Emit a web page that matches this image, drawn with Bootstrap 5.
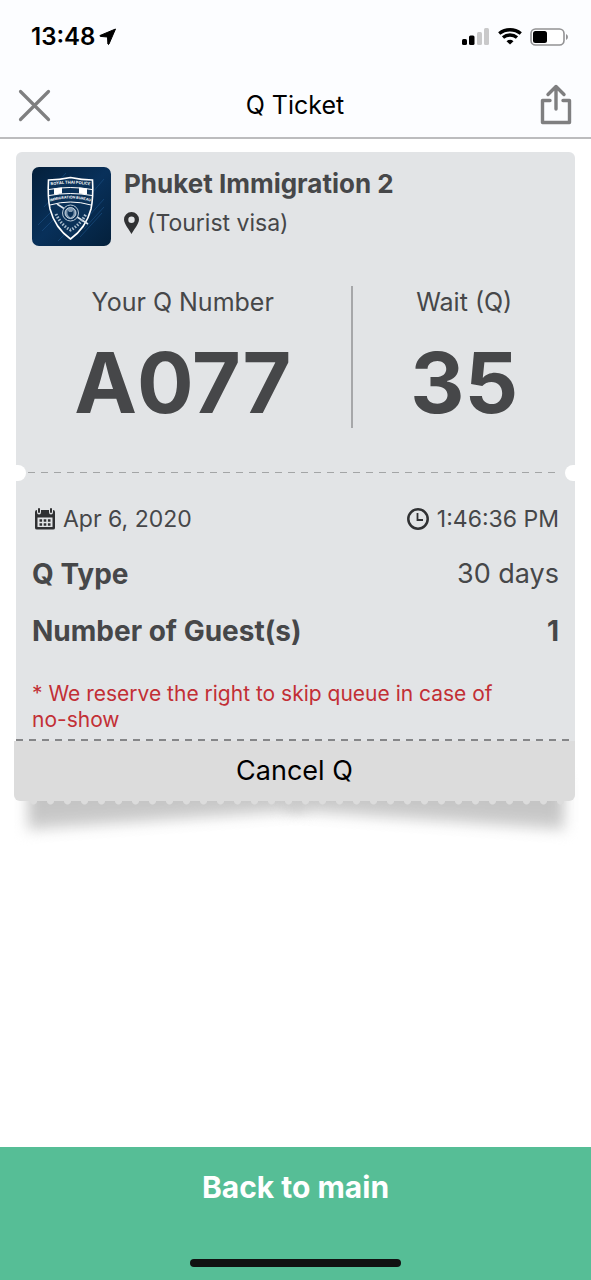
<!DOCTYPE html>
<html lang="en">
<head>
<meta charset="utf-8">
<meta name="viewport" content="width=device-width, initial-scale=1">
<title>Q Ticket</title>
<link href="https://cdn.jsdelivr.net/npm/bootstrap@5.3.0/dist/css/bootstrap.min.css" rel="stylesheet">
<style>
  body { font-family: Inter, "Liberation Sans", sans-serif; color: #464749; background: #fff; }
  svg { display: block; flex: none; }
  .top-area { background: #fcfdff; border-bottom: 2px solid #bcbcbe; color: #000; }
  .status-row { height: 73px; padding: 0 23px 0 31px; }
  .clock { font-size: 24px; font-weight: 600; line-height: 28px; }
  .title-row { height: 64px; padding: 0 18px; }
  .title-row h1 { font-size: 25px; line-height: 32px; font-weight: 400; }
  .icon-btn { background: none; border: 0; padding: 0; color: #7f7f80; }
  .ticket-wrap { padding: 13px 16px 0; }
  .ticket { position: relative; z-index: 0; }
  .ticket-body { background: #e2e4e6; border-radius: 6px 6px 0 0; }
  .stub-top { padding: 15px 16px 34px; }
  .place { padding-left: 13px; }
  .place-name { font-size: 26px; line-height: 34px; font-weight: 700; }
  .t-small { font-size: 23px; line-height: 32px; }
  .place .t-small { padding-top: 6px; }
  .t-base { font-size: 25px; line-height: 32px; }
  .t-row { font-size: 27px; line-height: 32px; }
  .t-strong { font-size: 28px; font-weight: 700; }
  .t-note { font-size: 21px; line-height: 26px; color: #c22f35; }
  .big-no { font-size: 84px; line-height: 96px; font-weight: 700; margin-top: 17px; }
  .figures { margin-top: 40px; }
  .q-col { flex: 0 0 61%; border-right: 2px solid #a6a7a9; height: 142px; padding-right: 18px; }
  .perf { height: 16px; background: repeating-linear-gradient(90deg, #a3a5a6 0 7px, transparent 7px 13px) 12px 7px / calc(100% - 28px) 1px no-repeat; }
  .notch { width: 10px; height: 16px; background: #fff; }
  .notch-l { border-radius: 0 8px 8px 0; }
  .notch-r { border-radius: 8px 0 0 8px; }
  .details { padding: 22px 16px 6px; }
  .rows { padding: 23px 0 34px; gap: 25px; }
  .tear { height: 2px; background: repeating-linear-gradient(90deg, #858688 0 7px, #e2e4e6 7px 13px); }
  .cancel { display: block; width: calc(100% + 2px); margin-left: -2px; height: 60px; border: 0; background: #dcdcdc; color: #000; border-radius: 0 0 6px 6px; font-size: 27px; line-height: 32px; padding: 0; }
  .scallop { height: 4px; margin: 0 9px; background: radial-gradient(circle at 50% 0, #dcdcdc 3px, transparent 4px) 0 0 / 17px 4px; }
  .ticket::before, .ticket::after { content: ""; position: absolute; z-index: -1; top: calc(100% - 30px); width: 50%; height: 55px; background: linear-gradient(#c4c4c4 60%, #d0d0d0); filter: blur(7px); }
  .ticket::before { left: 12px; transform: skewY(-4deg); transform-origin: 0 100%; }
  .ticket::after { right: 12px; transform: skewY(4deg); transform-origin: 100% 100%; }
  .bottom-area { background: #56be96; height: 133px; }
  .back { display: block; width: 100%; height: 80px; background: none; border: 0; color: #fff; font-size: 30px; line-height: 34px; font-weight: 700; padding: 0; }
  .home-bar { width: 211px; height: 8px; border-radius: 4px; background: #111; margin-bottom: 13px; }
</style>
</head>
<body class="d-flex flex-column min-vh-100">
<header class="top-area">
  <div class="status-row d-flex align-items-center justify-content-between">
    <div class="clock d-flex align-items-center gap-1">13:48
      <svg width="18" height="18" viewBox="0 0 18 18" aria-hidden="true"><path d="M16.500 1 1 7.500Q.5 8.200 1.500 8.400L8.500 9 8.900 16Q9.400 17 10 16Z" fill="#000" stroke="#000" stroke-linejoin="round"/></svg>
    </div>
    <div class="d-flex align-items-center gap-2">
      <svg width="28" height="17" viewBox="0 0 28 17" aria-hidden="true"><rect y="11" width="5" height="6" rx="1.500"/><rect x="7" y="7.500" width="5.500" height="9.500" rx="1.500"/><rect x="15" y="4" width="5" height="13" rx="1.500" fill="#c9c9ca"/><rect x="22" width="5" height="17" rx="1.500" fill="#c9c9ca"/></svg>
      <svg width="24" height="17" viewBox="0 0 24 17" aria-hidden="true"><g fill="none" stroke="#000" stroke-width="3.400"><path d="M1.200 5.500Q6 1.800 12 1.800T22.800 5.500"/><path d="M5 9.500Q8 7 12 7T19 9.500"/></g><path d="M12 16.500 8.500 13.200Q12 10.400 15.500 13.200Z"/></svg>
      <svg width="38" height="18" viewBox="0 0 38 18" aria-hidden="true"><rect x="1" y="1" width="33" height="16" rx="4.500" fill="#fff" stroke="#929294" stroke-width="1.600"/><rect x="3" y="3" width="14" height="12" rx="2.500"/><path d="M36 6q2 1 2 3t-2 3z" fill="#929294"/></svg>
    </div>
  </div>
  <div class="title-row d-flex align-items-center justify-content-between">
    <button class="icon-btn" type="button" aria-label="Close"><svg width="33" height="33" viewBox="0 0 33 33"><path d="M2.500 2.500l28 28M30.500 2.500l-28 28" stroke="currentColor" stroke-width="3.200" stroke-linecap="round"/></svg></button>
    <h1 class="m-0">Q Ticket</h1>
    <button class="icon-btn" type="button" aria-label="Share"><svg width="34" height="42" viewBox="0 0 34 42"><path d="M11 16.500H3.500v22h27v-22H24M17 25V2.500M9 10.500l8-8 8 8" fill="none" stroke="currentColor" stroke-width="3.400" stroke-linecap="round" stroke-linejoin="round"/></svg></button>
  </div>
</header>

<main class="ticket-wrap flex-grow-1">
  <div class="ticket">
    <div class="ticket-body">
      <section class="stub-top">
        <div class="d-flex">
          <svg width="79" height="79" viewBox="0 0 79 79" role="img" aria-label="Immigration Bureau">
            <defs>
              <linearGradient id="navy" x1="0" y1="0" x2="1" y2="1"><stop offset="0" stop-color="#04203b"/><stop offset=".5" stop-color="#08305a"/><stop offset="1" stop-color="#04203b"/></linearGradient>
              <path id="arc1" d="M18 18.500Q38.500 15 59 18.500"/><path id="arc2" d="M18.500 34.500Q38.500 28.500 58.500 34.500"/>
            </defs>
            <rect width="79" height="79" rx="7" fill="url(#navy)"/>
            <path d="M6 58 34 30M10 64l26-26M20 22 34 6M52 62l20-22M48 70l22-24M60 26l12-14M12 40l10-11M26 74l12-12M56 50l16-18" stroke="#17497a" stroke-width="1" opacity=".8"/>
            <path d="M16.500 13Q27 13 38.500 10.500 50 13 60.500 13 61.500 30 59 42 54 61 38.500 72 23 61 18 42 15.500 30 16.500 13Z" fill="#0a3158" stroke="#fff" stroke-width="1.600"/>
            <path d="M17 22.500Q38 18.500 60 22.500M17 28.500Q38 24.500 60 28.500M18 38Q38.500 32 59 38" fill="none" stroke="#fff"/>
            <path d="M22 21.500l8-1v6l-8 1zM47 20.500l8 1v6l-8-1z" fill="#fff"/>
            <path d="M25 37 56 57" stroke="#dfe7ee" stroke-width="1.500"/>
            <circle cx="38.500" cy="46" r="8" fill="#0a3158" stroke="#b8c8d6"/><circle cx="38.500" cy="46" r="5.500" fill="#7e98b0" stroke="#dfe7ee" stroke-width=".8"/>
            <path d="M35.500 43l1.500 2h3l1.500-2v4q-1 3-3 3.500-2-.5-3-3.500z" fill="#0a3158"/>
            <path d="M24 47Q29 58 38.500 63 48 58 54 47" fill="none" stroke="#a9bccd" stroke-width="3" stroke-dasharray="1.500 1.500"/>
            <g fill="#fff" font-size="4" font-weight="700" text-anchor="middle"><text><textPath href="#arc1" startOffset="50%">ROYAL THAI POLICE</textPath></text><text font-size="3.600"><textPath href="#arc2" startOffset="50%">IMMIGRATION BUREAU</textPath></text></g>
          </svg>
          <div class="place">
            <div class="place-name">Phuket Immigration 2</div>
            <div class="t-small d-flex align-items-center gap-2">
              <svg width="15" height="22" viewBox="0 0 15 22" aria-hidden="true"><path fill="#303133" fill-rule="evenodd" d="M7.500 0A7.500 7.500 0 0 1 15 7.500C15 12 9.500 18 7.500 22 5.500 18 0 12 0 7.500A7.500 7.500 0 0 1 7.500 0Zm0 4.500a3.200 3.200 0 1 0 0 6.400 3.200 3.200 0 0 0 0-6.400Z"/></svg>
              (Tourist visa)
            </div>
          </div>
        </div>
        <div class="figures d-flex text-center">
          <div class="q-col"><div class="t-base">Your Q Number</div><div class="big-no">A077</div></div>
          <div class="flex-grow-1 ps-3"><div class="t-base">Wait (Q)</div><div class="big-no">35</div></div>
        </div>
      </section>
      <div class="perf d-flex justify-content-between"><span class="notch notch-l"></span><span class="notch notch-r"></span></div>
      <section class="details">
        <div class="t-small d-flex justify-content-between">
          <div class="d-flex align-items-center gap-2">
            <svg width="23" height="22" viewBox="-3 0 23 22" aria-hidden="true"><path fill="#303133" fill-rule="evenodd" d="M0 4q0-2 2-2v2q0 2.500 2 2.500T6 4V2h8v2q0 2.500 2 2.500T18 4V2q2 0 2 2v16q0 1.500-2 1.500H2Q0 21.500 0 20ZM2.500 9.500v9.500h15V9.500Z"/><path d="M4 1v3M16 1v3" stroke="#303133" stroke-width="2" stroke-linecap="round"/><path d="M4.500 12.500h11M4.500 16.500h11" stroke="#303133" stroke-width="2.600" stroke-dasharray="2.600 1.600"/></svg>
            Apr 6, 2020
          </div>
          <div class="d-flex align-items-center gap-2">
            <svg width="22" height="22" viewBox="0 0 22 22" aria-hidden="true"><g fill="none" stroke="#303133"><circle cx="11" cy="11" r="9.700" stroke-width="2.500"/><path d="M10.500 5v7H16" stroke-width="1.800"/></g></svg>
            1:46:36 PM
          </div>
        </div>
        <div class="rows d-flex flex-column">
          <div class="t-row d-flex justify-content-between"><span class="t-strong">Q Type</span><span>30 days</span></div>
          <div class="t-row t-strong d-flex justify-content-between"><span>Number of Guest(s)</span><span>1</span></div>
        </div>
        <p class="t-note mb-0">* We reserve the right to skip queue in case of <span class="text-nowrap d-inline-block">no-show</span></p>
      </section>
      <div class="tear"></div>
    </div>
    <button class="cancel" type="button">Cancel Q</button>
    <div class="scallop"></div>
  </div>
</main>

<footer class="bottom-area d-flex flex-column align-items-center justify-content-between">
  <button class="back" type="button">Back to main</button>
  <div class="home-bar"></div>
</footer>
<script src="https://cdn.jsdelivr.net/npm/bootstrap@5.3.0/dist/js/bootstrap.bundle.min.js"></script>
</body>
</html>
